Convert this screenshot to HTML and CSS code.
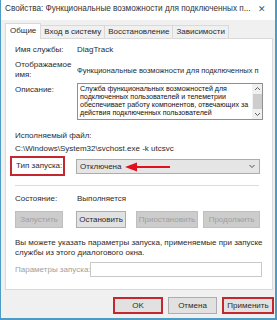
FILE: index.html
```html
<!DOCTYPE html>
<html lang="ru">
<head>
<meta charset="utf-8">
<link rel="stylesheet" href="styles.css">
</head>
<body>
<div class="window">
  <div class="titlebar">
    <span class="title">Свойства: Функциональные возможности для подключенных п...</span>
    <span class="close">✕</span>
  </div>
  <div class="body">
    <div class="tabs">
      <div class="tab active">Общие</div>
      <div class="tab">Вход в систему</div>
      <div class="tab">Восстановление</div>
      <div class="tab">Зависимости</div>
    </div>
    <div class="panel">
      <div class="row r-name">
        <div class="label">Имя службы:</div>
        <div class="value">DiagTrack</div>
      </div>
      <div class="row r-display">
        <div class="label two">Отображаемое<br>имя:</div>
        <div class="value clip">Функциональные возможности для подключенных п</div>
      </div>
      <div class="row r-desc">
        <div class="label top">Описание:</div>
        <div class="textarea">
          <div class="desc-text">Служба функциональных возможностей для подключенных пользователей и телеметрии обеспечивает работу компонентов, отвечающих за действия подключенных пользователей</div>
          <div class="scrollbar">
            <svg class="arr" width="9" height="6" viewBox="0 0 9 6"><path d="M2 4 L4.5 1.5 L7 4" fill="none" stroke="#606060" stroke-width="1"/></svg>
            <div class="thumb"></div>
            <svg class="arr" width="9" height="6" viewBox="0 0 9 6"><path d="M2 2 L4.5 4.5 L7 2" fill="none" stroke="#606060" stroke-width="1"/></svg>
          </div>
        </div>
      </div>
      <div class="line r-exe">Исполняемый файл:</div>
      <div class="line r-path">C:\Windows\System32\svchost.exe -k utcsvc</div>
      <div class="row r-start">
        <div class="label boxed">Тип запуска:</div>
        <div class="select">
          <span>Отключена</span>
          <svg class="chev" width="8" height="6" viewBox="0 0 8 6"><path d="M1.5 2 L4 4.5 L6.5 2" fill="none" stroke="#505050" stroke-width="1"/></svg>
          <svg class="redarrow" width="46" height="10" viewBox="0 0 46 10"><path d="M10 5 H45" stroke="#e2101c" stroke-width="2"/><path d="M0 5 L12 0.5 L12 9.5 Z" fill="#e2101c"/></svg>
        </div>
      </div>
      <div class="sep"></div>
      <div class="row r-state">
        <div class="label">Состояние:</div>
        <div class="value">Выполняется</div>
      </div>
      <div class="btnrow">
        <div class="btn disabled b1">Запустить</div>
        <div class="btn b2">Остановить</div>
        <div class="btn disabled b3">Приостановить</div>
        <div class="btn disabled b4">Продолжить</div>
      </div>
      <p class="hint">Вы можете указать параметры запуска, применяемые при запуске службы из этого диалогового окна.</p>
      <div class="row r-params">
        <div class="label dim">Параметры запуска:</div>
        <div class="input"></div>
      </div>
    </div>
    <div class="footer">
      <div class="btn fbtn red ok">OK</div>
      <div class="btn fbtn cancel">Отмена</div>
      <div class="btn fbtn red apply">Применить</div>
    </div>
  </div>
</div>
</body>
</html>
```

FILE: styles.css
```css
* { box-sizing: border-box; }
html, body { margin: 0; padding: 0; }
body {
  width: 277px;
  height: 320px;
  overflow: hidden;
  font-family: "Liberation Sans", Arial, sans-serif;
  font-size: 8px;
  color: #2b2b2b;
  background: #fff;
}
.window {
  width: 277px;
  height: 320px;
  display: flex;
  flex-direction: column;
  border-left: 1px solid #4d9cc6;
  border-right: 2px solid #4d9cc6;
  border-bottom: 2px solid #4d9cc6;
}
.titlebar {
  height: 20px;
  background: #fff;
  display: flex;
  align-items: center;
  padding: 0 0 3px 4px;
}
.title { flex: 1; white-space: nowrap; color: #333; font-size: 8.2px; }
.close { width: 14px; font-size: 9px; color: #555; margin-right: 6px; text-align: center; }
.body {
  flex: 1;
  background: #f0f0f0;
  padding: 3px 0 0 4px;
  display: flex;
  flex-direction: column;
}
.tabs {
  display: flex;
  height: 15px;
  align-items: flex-end;
  padding-left: 1px;
}
.tab {
  height: 13px;
  line-height: 12px;
  padding: 0 3px;
  border: 1px solid #d9d9d9;
  border-bottom: none;
  margin-left: -1px;
  background: #f0f0f0;
  white-space: nowrap;
}
.tab.active {
  height: 16px;
  line-height: 14px;
  background: #fff;
  position: relative;
  z-index: 1;
  margin-bottom: -1px;
  padding: 0 4px;
}
.panel {
  width: 268px;
  height: 252px;
  background: #fff;
  border: 1px solid #d9d9d9;
  padding: 3px 0 0 9px;
}
.row { display: flex; align-items: center; }
.label { width: 62px; flex: none; white-space: nowrap; }
.value { white-space: nowrap; }
.r-name { height: 14px; }
.r-display { height: 20px; margin-top: 4px; }
.label.two { line-height: 10px; }
.clip { font-size: 7.5px; padding-top: 1px; }
.r-desc { align-items: flex-start; margin-top: 3px; }
.label.top { padding-top: 2px; line-height: 10px; }
.textarea {
  width: 186px;
  height: 37px;
  border: 1px solid #8f8f8f;
  display: flex;
  background: #fff;
}
.desc-text {
  flex: 1;
  font-size: 7.1px;
  line-height: 8px;
  padding: 1px 2px;
  overflow: hidden;
  color: #111;
}
.scrollbar {
  width: 10px;
  background: #f0f0f0;
  display: flex;
  flex-direction: column;
  align-items: center;
  justify-content: space-between;
  padding: 2px 0 2px;
}
.thumb { width: 9px; height: 15px; background: #cdcdcd; }
.line { height: 12px; line-height: 12px; white-space: nowrap; }
.r-exe { margin-top: 10px; }
.r-path { margin-top: 1px; }
.r-start { height: 20px; margin-top: 1px; }
.label.boxed {
  width: 55px;
  height: 20px;
  margin-left: -5px;
  margin-right: 11px;
  padding-left: 4px;
  line-height: 16px;
  border: 2px solid #c3282f;
}
.select {
  position: relative;
  width: 184px;
  height: 15px;
  background: #e5e5e5;
  border: 1px solid #acacac;
  display: flex;
  align-items: center;
  padding-left: 3px;
}
.select span { flex: 1; }
.chev { margin-right: 3px; }
.redarrow { position: absolute; left: 48px; top: 2px; }
.sep { width: 244px; height: 1px; background: #dcdcdc; margin-top: 9px; }
.r-state { height: 12px; margin-top: 6px; }
.btnrow { display: flex; margin-top: 7px; height: 17px; }
.btn {
  height: 17px;
  border: 1px solid #adadad;
  background: #e1e1e1;
  display: flex;
  align-items: center;
  justify-content: center;
  white-space: nowrap;
}
.btn.disabled { background: #cccccc; border-color: #bfbfbf; color: #a0a0a0; }
.b1 { width: 48px; }
.b2 { width: 50px; margin-left: 13px; }
.b3 { width: 62px; margin-left: 10px; }
.b4 { width: 57px; margin-left: 5px; }
.hint { margin: 10px 0 0; line-height: 10px; width: 250px; }
.r-params { margin-top: 4px; height: 15px; }
.label.dim { color: #a0a0a0; width: 75px; }
.input { width: 172px; height: 15px; border: 1px solid #c8c8c8; background: #fff; }
.footer {
  display: flex;
  justify-content: flex-end;
  gap: 5px;
  padding: 7px 0 0 0;
  margin-right: 1px;
}
.fbtn { height: 17px; }
.ok { width: 50px; }
.cancel { width: 49px; }
.apply { width: 52px; }
.fbtn.red { border: 2px solid #c3282f; }
```
